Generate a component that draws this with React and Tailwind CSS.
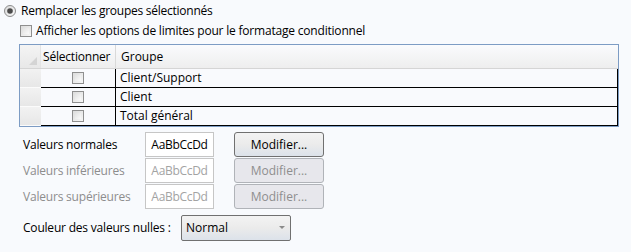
import React from 'react'

const font = { fontFamily: '"Open Sans", "Noto Sans", sans-serif' }

const Check = ({ className = '' }) => (
  <span className={`inline-block w-[12px] h-[12px] border border-[#8f8f8f] bg-gradient-to-br from-[#dcdcdc] to-[#f7f7f7] p-[2px] ${className}`}>
    <span className="block w-full h-full bg-gradient-to-br from-[#e2e2e2] to-[#fafafa]" />
  </span>
)

const rows = ['Client/Support', 'Client', 'Total général']

const Button = ({ disabled }) => (
  <button
    className={`h-[25px] w-[90px] rounded-[3px] border text-[12px] ${
      disabled
        ? 'border-[#b0b3b8] bg-[#e7e7ec] text-[#8e8e8e]'
        : 'border-[#707070] bg-gradient-to-b from-[#f3f3f3] via-[#ebebeb] to-[#dce2ea] text-black'
    }`}
  >
    Modifier...
  </button>
)

export default function App() {
  const values = [
    { label: 'Valeurs normales', disabled: false },
    { label: 'Valeurs inférieures', disabled: true },
    { label: 'Valeurs supérieures', disabled: true },
  ]

  return (
    <div className="w-[631px] h-[252px] bg-[#f8fafd] text-[12px] text-black overflow-hidden" style={font}>
      {/* Radio */}
      <div className="flex items-center gap-[5px] pl-[4px] pt-[2px] h-[18px] box-content">
        <svg width="12" height="12" viewBox="0 0 12 12">
          <defs>
            <linearGradient id="rg" x1="0" y1="0" x2="1" y2="1">
              <stop offset="0" stopColor="#d8d8d8" />
              <stop offset="1" stopColor="#f8f8f8" />
            </linearGradient>
          </defs>
          <circle cx="6" cy="6" r="5.5" fill="url(#rg)" stroke="#8d8d8d" />
          <circle cx="6" cy="6" r="2.8" fill="#4a4a4a" />
        </svg>
        <span className="leading-none tracking-[-0.25px]">Remplacer les groupes sélectionnés</span>
      </div>

      {/* Checkbox */}
      <div className="flex items-center gap-[4px] pl-[20px] mt-[1px] h-[19px]">
        <Check />
        <span className="leading-none tracking-[-0.2px]">Afficher les options de limites pour le formatage conditionnel</span>
      </div>

      {/* Grid */}
      <div className="ml-[19px] mt-[4px] w-[600px] border border-[#7d9cc4] bg-[#f9fafd]">
        <div className="grid grid-cols-[21px_75px_1fr] h-[24px] bg-gradient-to-b from-[#fafbfd] to-[#eeeeee] border-b border-[#d5d5d5]">
          <div className="relative border-r border-[#e4e4e4] bg-gradient-to-b from-[#f4f4f4] to-[#e8e8e8]">
            <svg className="absolute right-[3px] bottom-[3px]" width="8" height="8" viewBox="0 0 8 8">
              <path d="M8 0 L8 8 L0 8 Z" fill="#d4d4d4" />
            </svg>
          </div>
          <div className="flex items-center pl-[2px] border-r border-[#d9d9d9] tracking-[-0.2px]">Sélectionner</div>
          <div className="flex items-center pl-[5px]">Groupe</div>
        </div>
        {rows.map((r) => (
          <div key={r} className="grid grid-cols-[21px_75px_1fr] h-[19px]">
            <div className="bg-gradient-to-b from-[#f2f2f2] to-[#e7e7e7] border-b border-[#fbfbfb]" />
            <div className="flex items-center justify-center border-b border-r border-black">
              <Check className="w-[11px] h-[11px]" />
            </div>
            <div className="flex items-center pl-[4px] border-b border-r border-black">{r}</div>
          </div>
        ))}
      </div>

      {/* Values */}
      <div className="grid grid-cols-[122px_69px_20px_90px] gap-y-[1px] pl-[23px] mt-[5px]">
        {values.map((v) => (
          <React.Fragment key={v.label}>
            <div className={`flex items-center tracking-[-0.2px] ${v.disabled ? 'text-[#8d8d8d]' : 'text-black'}`}>{v.label}</div>
            <div
              className={`flex items-center justify-center h-[25px] border border-[#c6c6c6] bg-white tracking-[-0.3px] ${
                v.disabled ? 'text-[#a3a3a3]' : 'text-black'
              }`}
            >
              AaBbCcDd
            </div>
            <div />
            <Button disabled={v.disabled} />
          </React.Fragment>
        ))}
      </div>

      {/* Null colour */}
      <div className="flex items-center pl-[23px] mt-[6px]">
        <span className="w-[158px] tracking-[-0.2px]">Couleur des valeurs nulles :</span>
        <div className="flex items-center justify-between w-[110px] h-[26px] pl-[4px] pr-[5px] border border-[#707070] rounded-[2px] bg-gradient-to-b from-[#f3f3f3] via-[#ebebeb] to-[#dce2ea]">
          <span>Normal</span>
          <svg width="6" height="4" viewBox="0 0 6 4">
            <path d="M0 0 L6 0 L3 3 Z" fill="#8a8a8a" />
          </svg>
        </div>
      </div>
    </div>
  )
}
